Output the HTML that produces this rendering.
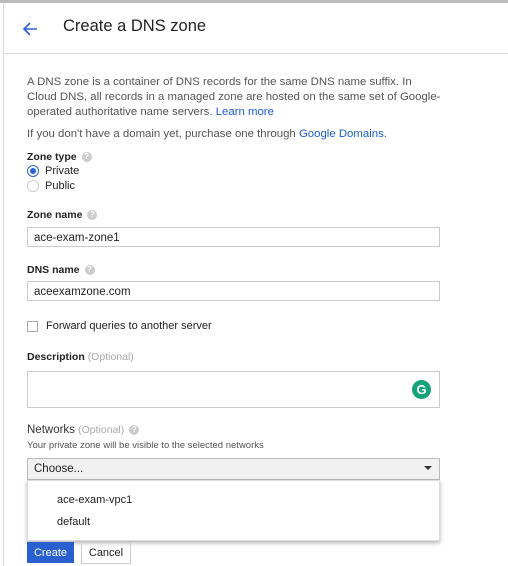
<html><head><style>
body{margin:0;width:508px;height:566px;background:#fff;font-family:"Liberation Sans",sans-serif;position:relative;overflow:hidden;color:#222}
.a{position:absolute}
.t{font-size:11.4px;color:#555;line-height:15px}
.lb{font-size:10.5px;font-weight:bold;color:#222}
.in{position:absolute;left:27px;height:20px;border:1px solid #ccc;font-size:11.5px;line-height:20px;padding-left:6px;box-sizing:border-box;width:413px}
.q{display:inline-block;width:10px;height:10px;border-radius:50%;background:#ccc;color:#fff;font-size:8px;line-height:10px;text-align:center;margin-left:5px;vertical-align:middle;font-weight:bold}
.opt{color:#aaa;font-weight:normal}
a{color:#1a5fd0;text-decoration:none}
</style></head><body>
<div class="a" style="left:0;top:0;width:508px;height:3px;background:#bbb"></div>
<div class="a" style="left:3px;top:3px;width:1px;height:563px;background:#ddd"></div>
<div class="a" style="left:4px;top:53px;width:504px;height:1px;background:#ddd"></div>
<svg class="a" style="left:22px;top:21px" width="16" height="16" viewBox="0 0 16 16"><path d="M15 8H2M8 2L2 8l6 6" stroke="#2b63d6" stroke-width="1.6" fill="none"/></svg>
<div class="a" style="left:63px;top:17px;font-size:16.5px;color:#222">Create a DNS zone</div>
<div class="a t" style="left:27px;top:75px;width:418px">A DNS zone is a container of DNS records for the same DNS name suffix. In<br>Cloud DNS, all records in a managed zone are hosted on the same set of Google-<br>operated authoritative name servers. <a>Learn more</a></div>
<div class="a t" style="left:27px;top:127px">If you don't have a domain yet, purchase one through <a>Google Domains</a>.</div>
<div class="a lb" style="left:27px;top:151px">Zone type<span class="q">?</span></div>
<div class="a" style="left:27px;top:165px;width:10px;height:10px;border:1px solid #2b63d6;border-radius:50%"><div style="margin:2px;width:6px;height:6px;border-radius:50%;background:#2b63d6"></div></div>
<div class="a" style="left:45px;top:165px;font-size:11px">Private</div>
<div class="a" style="left:27px;top:180px;width:10px;height:10px;border:1px solid #ccc;border-radius:50%"></div>
<div class="a" style="left:45px;top:180px;font-size:11px">Public</div>
<div class="a lb" style="left:27px;top:209px">Zone name<span class="q">?</span></div>
<div class="in" style="top:227px">ace-exam-zone1</div>
<div class="a lb" style="left:27px;top:264px">DNS name<span class="q">?</span></div>
<div class="in" style="top:281px">aceexamzone.com</div>
<div class="a" style="left:27px;top:321px;width:9px;height:9px;border:1px solid #aaa"></div>
<div class="a" style="left:46px;top:320px;font-size:11px">Forward queries to another server</div>
<div class="a lb" style="left:27px;top:351px">Description <span class="opt">(Optional)</span></div>
<div class="in" style="top:371px;height:37px"></div>
<div class="a" style="left:412px;top:380px;width:19px;height:19px;border-radius:50%;background:#15a37a;color:#fff;font-weight:bold;font-size:13px;text-align:center;line-height:19px">G</div>
<div class="a" style="left:27px;top:424px;font-size:11.5px;color:#333">Networks <span style="color:#aaa;font-size:10.5px">(Optional)</span><span class="q">?</span></div>
<div class="a" style="left:27px;top:440px;font-size:9.5px;color:#555">Your private zone will be visible to the selected networks</div>
<div class="in" style="top:458px;height:22px;background:#f1f1f1;border-color:#bbb;color:#222">Choose...</div>
<div class="a" style="left:424px;top:466px;width:0;height:0;border-left:4px solid transparent;border-right:4px solid transparent;border-top:4px solid #333"></div>
<div class="a" style="left:27px;top:480px;width:413px;height:61px;background:#fff;box-shadow:0 2px 4px rgba(0,0,0,.3);border:1px solid #ddd;box-sizing:border-box"></div>
<div class="a" style="left:57px;top:494px;font-size:11px">ace-exam-vpc1</div>
<div class="a" style="left:57px;top:516px;font-size:11px">default</div>
<div class="a" style="left:27px;top:542px;width:47px;height:21px;background:#2a5fd0;color:#fff;font-size:11px;text-align:center;line-height:21px;padding-top:1px;box-sizing:border-box">Create</div>
<div class="a" style="left:81px;top:542px;width:48px;height:20px;border:1px solid #ccc;font-size:11px;text-align:center;line-height:20px">Cancel</div>
</body></html>
